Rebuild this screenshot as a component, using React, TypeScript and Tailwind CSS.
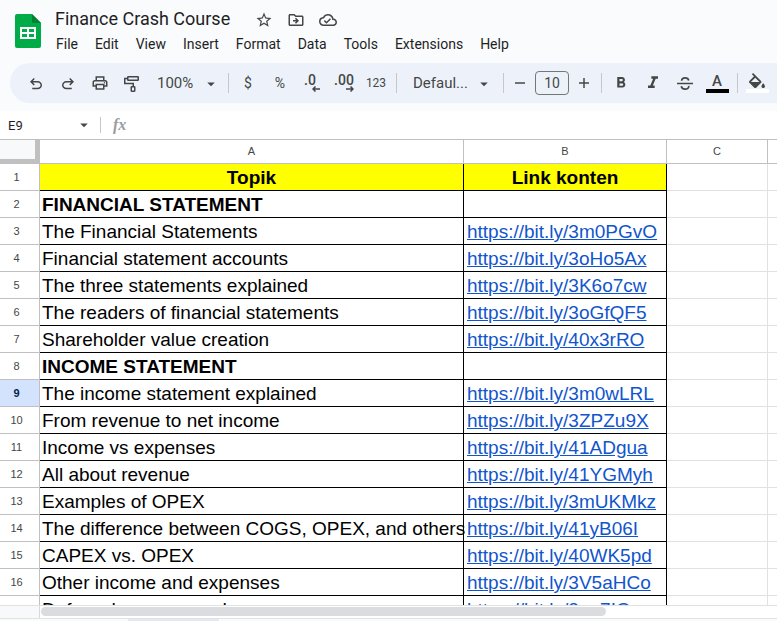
import type { ReactNode } from 'react';
import {
  MdStarBorder,
  MdOutlineDriveFileMove,
  MdOutlineCloudDone,
  MdOutlineLocalPrintshop,
  MdFormatBold,
  MdFormatItalic,
  MdArrowDropDown,
} from 'react-icons/md';

type Row = { topic: string; link?: string; heading?: boolean };

const rows: Row[] = [
  { topic: 'FINANCIAL STATEMENT', heading: true },
  { topic: 'The Financial Statements', link: 'https://bit.ly/3m0PGvO' },
  { topic: 'Financial statement accounts', link: 'https://bit.ly/3oHo5Ax' },
  { topic: 'The three statements explained', link: 'https://bit.ly/3K6o7cw' },
  { topic: 'The readers of financial statements', link: 'https://bit.ly/3oGfQF5' },
  { topic: 'Shareholder value creation', link: 'https://bit.ly/40x3rRO' },
  { topic: 'INCOME STATEMENT', heading: true },
  { topic: 'The income statement explained', link: 'https://bit.ly/3m0wLRL' },
  { topic: 'From revenue to net income', link: 'https://bit.ly/3ZPZu9X' },
  { topic: 'Income vs expenses', link: 'https://bit.ly/41ADgua' },
  { topic: 'All about revenue', link: 'https://bit.ly/41YGMyh' },
  { topic: 'Examples of OPEX', link: 'https://bit.ly/3mUKMkz' },
  { topic: 'The difference between COGS, OPEX, and others', link: 'https://bit.ly/41yB06I' },
  { topic: 'CAPEX vs. OPEX', link: 'https://bit.ly/40WK5pd' },
  { topic: 'Other income and expenses', link: 'https://bit.ly/3V5aHCo' },
  { topic: 'Deferred revenue and', link: 'https://bit.ly/3ne7IO' },
];

const menus = ['File', 'Edit', 'View', 'Insert', 'Format', 'Data', 'Tools', 'Extensions', 'Help'];

function IconButton({ label, narrow, children }: { label: string; narrow?: boolean; children: ReactNode }) {
  return (
    <button
      type="button"
      aria-label={label}
      className={`flex h-7 shrink-0 items-center justify-center rounded text-[#444746] ${narrow ? 'w-[22px]' : 'w-7'}`}
    >
      {children}
    </button>
  );
}

function Divider() {
  return <div className="ml-0.5 mr-px h-5 w-px shrink-0 bg-[#c7c7c7]" />;
}

function Undo({ flipped }: { flipped?: boolean }) {
  return (
    <svg viewBox="0 -960 960 960" className={`mt-0.5 size-[18px] ${flipped ? '-scale-x-100' : ''}`} fill="currentColor">
      <path d="M280-200v-80h284q63 0 109.500-40T720-420q0-60-46.500-100T564-560H312l104 104-56 56-200-200 200-200 56 56-104 104h252q97 0 163.500 63T800-420q0 94-66.500 157T564-200H280Z" />
    </svg>
  );
}

function PaintRoller() {
  return (
    <svg viewBox="0 0 18 18" className="mt-0.5 size-[18px]" fill="none" stroke="currentColor" strokeWidth="1.5">
      <rect x="4.750" y="1.750" width="10.500" height="3.500" rx=".5" />
      <path d="M4.750 3.500h-3v5h8.500v3" />
      <rect x="8.250" y="11.750" width="3.500" height="4.500" rx=".4" />
    </svg>
  );
}

function Strikethrough() {
  return (
    <svg viewBox="0 0 18 18" className="size-[18px]" fill="none" stroke="currentColor" strokeWidth="1.700">
      <path d="M1 9.500h16M12.800 6.400C12.300 4.600 11 3.800 9.100 3.800 7 3.800 5.700 4.800 5.600 6.800M5.200 12.200c.5 1.900 1.800 2.900 4 2.900s3.700-1.100 3.600-3.200" />
    </svg>
  );
}

function PaintBucket() {
  return (
    <svg viewBox="2 0 20 18" className="h-4 w-[18px]" fill="currentColor">
      <path d="M16.560 8.940 7.620 0 6.210 1.410l2.380 2.380-5.150 5.150c-.59.59-.59 1.540 0 2.120l5.500 5.500c.29.29.68.44 1.060.44s.77-.15 1.060-.44l5.500-5.500c.59-.58.59-1.530 0-2.120zM5.210 10 10 5.210 14.790 10H5.210zM19 11.500s-2 2.170-2 3.500c0 1.100.9 2 2 2s2-.9 2-2c0-1.330-2-3.500-2-3.500z" />
    </svg>
  );
}

function DecimalIcon({ digits, increase }: { digits: string; increase?: boolean }) {
  return (
    <span className={`flex flex-col ${increase ? 'items-end' : 'items-start'}`}>
      <span className="text-sm leading-[11px] font-medium">{digits}</span>
      <svg viewBox="0 0 8 6" className={`h-1.5 w-2 ${increase ? '' : 'ml-2 -scale-x-100'}`} fill="none" stroke="currentColor" strokeWidth="1.500">
        <path d="M0 3h7M4.500.5 7 3 4.500 5.500" />
      </svg>
    </span>
  );
}

function Sheet() {
  return (
    <table className="w-full table-fixed border-separate border-spacing-0 font-['Liberation_Sans',Arial,sans-serif]">
      <colgroup>
        <col className="w-10" />
        <col className="w-[424px]" />
        <col className="w-[203px]" />
        <col className="w-[101px]" />
        <col />
      </colgroup>
      <thead>
        <tr className="h-6 text-[11px] text-[#444746]">
          <th aria-label="Select all" className="border-r-[5px] border-b-[5px] border-[#c0c0c0] bg-[#f8f9fa] p-0" />
          {['A', 'B', 'C', ''].map((name) => (
            <th key={name} className="border-r border-b border-[#c0c0c0] p-0 font-normal last:border-r-0">
              {name}
            </th>
          ))}
        </tr>
      </thead>
      <tbody className="text-[19px] leading-6 text-black">
        <tr className="h-[27px]">
          <th className="border-r border-b border-[#c0c0c0] p-0 pr-1.5 text-[11px] font-normal text-[#444746]">1</th>
          <th className="border-r border-b border-black bg-[#ffff00] p-0 pt-0.5">Topik</th>
          <th className="border-r border-b border-black bg-[#ffff00] p-0 pt-0.5">Link konten</th>
          <td className="border-r border-b border-[#e1e1e1] p-0" />
          <td className="border-b border-[#e1e1e1] p-0" />
        </tr>
        {rows.map((row, i) => {
          const n = i + 2;
          const active = n === 9;
          return (
            <tr key={n} className="h-[27px]">
              <th
                className={`border-r border-b border-[#c0c0c0] p-0 pr-1.5 text-[11px] ${
                  active ? 'bg-[#d3e3fd] font-bold text-[#041e49]' : 'font-normal text-[#444746]'
                }`}
              >
                {n}
              </th>
              <td className={`border-r border-b border-black p-0 pt-0.5 pl-0.5 whitespace-nowrap ${row.heading ? 'font-bold' : ''}`}>
                {row.topic}
              </td>
              <td className="border-r border-b border-black p-0 pt-0.5 pl-[3px] whitespace-nowrap">
                {row.link && (
                  <a href={row.link} className="text-[#1155cc] underline">
                    {row.link}
                  </a>
                )}
              </td>
              <td className="border-r border-b border-[#e1e1e1] p-0" />
              <td className="border-b border-[#e1e1e1] p-0" />
            </tr>
          );
        })}
      </tbody>
    </table>
  );
}

export default function App() {
  return (
    <div className="flex h-screen flex-col overflow-hidden bg-[#f9fbfd] font-[Roboto,sans-serif] text-[#1f1f1f]">
      <header className="flex h-[63px] shrink-0 items-start pl-[15px]">
        <svg viewBox="0 0 26 34" className="mt-3.5 h-[34px] w-[26px] shrink-0" aria-label="Sheets">
          <path d="M2 0h15l9 9v23a2 2 0 0 1-2 2H2a2 2 0 0 1-2-2V2a2 2 0 0 1 2-2Z" fill="#00ac47" />
          <path d="M17 0l9 9h-9Z" fill="#00832d" />
          <path d="M5 13h16v12H5Zm2 2v3h5v-3Zm7 0v3h5v-3Zm-7 5v3h5v-3Zm7 0v3h5v-3Z" fill="#fff" fillRule="evenodd" />
        </svg>
        <div className="ml-3.5 flex flex-col pt-1.5">
          <div className="flex items-center gap-1">
            <input aria-label="Document title" defaultValue="Finance Crash Course" className="h-7 w-[191px] bg-transparent pb-0.5 text-lg outline-none" />
            <IconButton label="Star"><MdStarBorder size={18} /></IconButton>
            <IconButton label="Move"><MdOutlineDriveFileMove size={18} /></IconButton>
            <IconButton label="Saved to Drive"><MdOutlineCloudDone size={18} /></IconButton>
          </div>
          <nav className="-ml-[7px] flex gap-px">
            {menus.map((menu) => (
              <button key={menu} type="button" className="px-2 text-sm leading-5">
                {menu}
              </button>
            ))}
          </nav>
        </div>
      </header>

      <div role="toolbar" className="ml-2.5 flex h-10 shrink-0 items-center gap-1 overflow-hidden rounded-l-full bg-[#edf2fa] pl-3 text-[#444746]">
        <IconButton label="Undo"><Undo /></IconButton>
        <IconButton label="Redo"><Undo flipped /></IconButton>
        <IconButton label="Print"><MdOutlineLocalPrintshop size={18} /></IconButton>
        <IconButton label="Paint format"><PaintRoller /></IconButton>
        <div className="relative shrink-0">
          <select aria-label="Zoom" className="h-7 w-[72px] appearance-none bg-transparent pl-[7px] text-[15px]">
            <option>100%</option>
          </select>
          <MdArrowDropDown size={18} className="pointer-events-none absolute top-1.5 right-0.5" />
        </div>
        <Divider />
        <IconButton label="Currency"><span className="text-sm">$</span></IconButton>
        <IconButton label="Percent"><span className="text-sm">%</span></IconButton>
        <IconButton label="Decrease decimal places"><DecimalIcon digits=".0" /></IconButton>
        <IconButton label="Increase decimal places"><DecimalIcon digits=".00" increase /></IconButton>
        <IconButton label="More formats"><span className="text-xs">123</span></IconButton>
        <Divider />
        <div className="relative shrink-0">
          <select aria-label="Font" className="h-7 w-[95px] appearance-none bg-transparent pl-[11px] text-[15px]">
            <option>Defaul...</option>
          </select>
          <MdArrowDropDown size={18} className="pointer-events-none absolute top-1.5 right-1" />
        </div>
        <Divider />
        <IconButton label="Decrease font size" narrow>
          <svg viewBox="0 0 10 10" className="size-2.5" stroke="currentColor" strokeWidth="1.500"><path d="M0 5h10" /></svg>
        </IconButton>
        <input aria-label="Font size" defaultValue="10" className="h-6 w-[34px] shrink-0 rounded border border-[#747775] bg-transparent text-center text-sm" />
        <IconButton label="Increase font size" narrow>
          <svg viewBox="0 0 10 10" className="size-2.5" stroke="currentColor" strokeWidth="1.500"><path d="M0 5h10M5 0v10" /></svg>
        </IconButton>
        <Divider />
        <IconButton label="Bold"><MdFormatBold size={18} /></IconButton>
        <IconButton label="Italic"><MdFormatItalic size={20} /></IconButton>
        <IconButton label="Strikethrough"><Strikethrough /></IconButton>
        <IconButton label="Text color">
          <span className="flex flex-col items-center">
            <span className="text-[15px] leading-4 font-medium">A</span>
            <span className="h-1 w-[23px] bg-black" />
          </span>
        </IconButton>
        <Divider />
        <IconButton label="Fill color">
          <span className="flex flex-col items-center">
            <PaintBucket />
            <span className="h-1 w-[23px] bg-white" />
          </span>
        </IconButton>
      </div>

      <div className="mt-2 flex h-7 shrink-0 items-center bg-white">
        <input aria-label="Name box" defaultValue="E9" className="h-6 w-[75px] bg-transparent pl-2 text-[13px] outline-none" />
        <MdArrowDropDown size={18} className="shrink-0 text-[#444746]" />
        <div className="ml-[7px] h-4 w-px bg-[#c7c7c7]" />
        <label htmlFor="formula" className="ml-3 font-['Liberation_Serif',serif] text-base font-bold text-[#999c9f] italic">fx</label>
        <input id="formula" className="ml-3 h-6 min-w-0 flex-1 bg-transparent outline-none" />
      </div>

      <main className="min-h-0 flex-1 overflow-hidden border-t border-[#c0c0c0] bg-white">
        <Sheet />
      </main>

      <div className="flex h-[13px] shrink-0 border-t border-[#e1e1e1] bg-white">
        <div className="w-10 border-r border-[#d9d9d9] bg-[#f8f9fa]" />
        <div className="flex flex-1 items-start pt-px pl-px">
          <div className="h-[9px] w-[565px] rounded-full bg-[#dadce0]" />
        </div>
      </div>
      <footer className="h-[3px] shrink-0 border-t border-[#e1e3e1] pl-32">
        <div className="h-0.5 w-[91px] bg-[#e1e9f7]" />
      </footer>
    </div>
  );
}
